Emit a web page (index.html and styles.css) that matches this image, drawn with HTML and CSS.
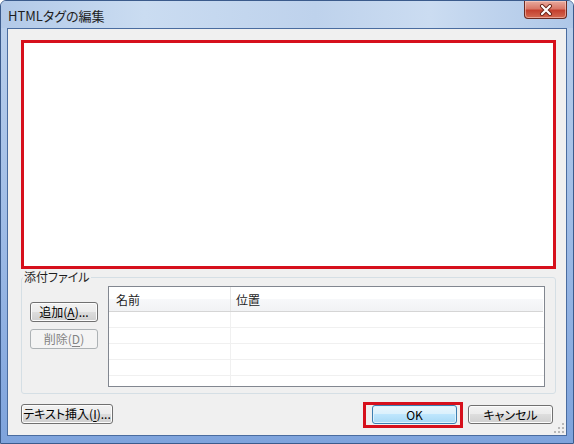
FILE: index.html
```html
<!DOCTYPE html>
<html lang="ja">
<head>
  <meta charset="UTF-8">
  <title>HTMLタグの編集</title>
  <link rel="stylesheet" href="styles.css">
</head>
<body>

  <div class="window">
    <div class="titlebar">
      <span class="title">HTMLタグの編集</span>
      <div class="close">
        <svg width="16" height="12" viewBox="0 0 16 12">
          <path d="M4 2 L12 10 M12 2 L4 10" stroke="#6b2418" stroke-width="4" stroke-linecap="round"/>
          <path d="M4 2 L12 10 M12 2 L4 10" stroke="#fff" stroke-width="2.2" stroke-linecap="round"/>
        </svg>
      </div>
    </div>

    <div class="client">
      <div class="editor"></div>

      <fieldset class="attach">
        <legend>添付ファイル</legend>
        <div class="attach-buttons">
          <button class="btn">追加(<u>A</u>)...</button>
          <button class="btn" disabled>削除(<u>D</u>)</button>
        </div>
        <div class="listview">
          <div class="lv-head">
            <div class="lv-col name">名前</div>
            <div class="lv-col path">位置</div>
          </div>
          <div class="lv-row"><div class="lv-cell name"></div><div class="lv-cell"></div></div>
          <div class="lv-row"><div class="lv-cell name"></div><div class="lv-cell"></div></div>
          <div class="lv-row"><div class="lv-cell name"></div><div class="lv-cell"></div></div>
          <div class="lv-row"><div class="lv-cell name"></div><div class="lv-cell"></div></div>
          <div class="lv-row last"><div class="lv-cell name"></div><div class="lv-cell"></div></div>
        </div>
      </fieldset>

      <div class="footer">
        <button class="btn btn-insert">テキスト挿入(<u>I</u>)...</button>
        <div class="spacer"></div>
        <button class="btn btn-ok marked">OK</button>
        <button class="btn btn-cancel">キャンセル</button>
      </div>

      <svg class="grip" width="10" height="10" viewBox="0 0 10 10">
        <rect x="8" y="0" width="2" height="2" fill="#b8b8b8"/>
        <rect x="4" y="4" width="2" height="2" fill="#b8b8b8"/>
        <rect x="8" y="4" width="2" height="2" fill="#b8b8b8"/>
        <rect x="0" y="8" width="2" height="2" fill="#b8b8b8"/>
        <rect x="4" y="8" width="2" height="2" fill="#b8b8b8"/>
        <rect x="8" y="8" width="2" height="2" fill="#b8b8b8"/>
      </svg>
    </div>
  </div>

</body>
</html>
```

FILE: styles.css
```css
body {
  margin: 0;
  padding: 0;
  font-family: "Noto Sans CJK JP", "Liberation Sans", sans-serif;
  font-size: 12px;
  font-feature-settings: "palt";
  color: #000;
  background: #fff;
}

.window {
  width: 574px;
  height: 444px;
  box-sizing: border-box;
  background: linear-gradient(to bottom, #bcd1ec, #9fbce6 50%, #7ea3dc);
  border: 1px solid #3b5b8c;
  border-radius: 6px 6px 0 0;
  overflow: hidden;
}

.titlebar {
  height: 27px;
  display: flex;
  align-items: flex-start;
  background: linear-gradient(to right, #b2c9e8, #cadcf1 25%, #bed2ec 55%, #cbdcf1 75%, #aec7e8);
}

.title {
  margin: 5px 0 0 7px;
  font-size: 13px;
  color: #1e1e1e;
  flex: 1;
}

.close {
  width: 43px;
  height: 18px;
  margin-right: 6px;
  box-sizing: border-box;
  border: 1px solid #6a2a22;
  border-top: none;
  border-radius: 0 0 4px 4px;
  background: linear-gradient(to bottom, #e8aa9e, #d97868 45%, #c4402e 55%, #d46a52);
  box-shadow: inset 0 0 0 1px rgba(255, 220, 210, 0.5);
  display: flex;
  align-items: center;
  justify-content: center;
}

.client {
  position: relative;
  margin: 0 6px;
  height: 408px;
  box-sizing: border-box;
  border: 1px solid #4a6c9f;
  background: #f0f0f0;
  padding-top: 11px;
}

.editor {
  height: 229px;
  margin: 0 10px 0 13px;
  box-sizing: border-box;
  border: 3px solid #d6101c;
  background: #fff;
}

.attach {
  margin: 1px 10px 0 13px;
  padding: 2px 10px 6px 8px;
  border: 1px solid #d5dfe5;
  border-radius: 3px;
  display: flex;
  gap: 10px;
}

.attach legend {
  padding: 0 1px;
  margin-left: -7px;
  line-height: 14px;
  color: #1e1e1e;
}

.attach-buttons {
  display: flex;
  flex-direction: column;
  gap: 7px;
  padding-top: 16px;
}

.btn {
  font-family: inherit;
  font-size: 12px;
  font-feature-settings: "palt";
  height: 20px;
  padding: 0;
  box-sizing: border-box;
  border: 1px solid #707070;
  border-radius: 3px;
  background: linear-gradient(to bottom, #f2f2f2, #ebebeb 50%, #dddddd 50%, #cfcfcf);
  box-shadow: inset 0 0 0 1px #fcfcfc;
  color: #000;
  line-height: 16px;
}

.btn u {
  text-underline-offset: 2px;
}

.btn:disabled {
  border-color: #adb2b5;
  background: #f4f4f4;
  box-shadow: none;
  color: #838383;
}

.attach-buttons .btn {
  width: 68px;
}

.listview {
  flex: 1;
  height: 101px;
  box-sizing: border-box;
  border: 1px solid #828790;
  background: #fff;
}

.lv-head {
  display: flex;
  height: 25px;
  box-sizing: border-box;
  border-bottom: 1px solid #d5d5d5;
  margin-right: 1px;
  background: linear-gradient(to bottom, #ffffff 50%, #f7f8fa 50%, #f1f2f4);
}

.lv-col {
  box-sizing: border-box;
  padding: 4px 0 0 7px;
  color: #1e1e1e;
}

.lv-col.name,
.lv-cell.name {
  box-sizing: border-box;
  width: 122px;
  border-right: 1px solid #e5e5e5;
}

.lv-col.path {
  padding-left: 5px;
}

.lv-row {
  display: flex;
  height: 16px;
  box-sizing: border-box;
  border-bottom: 1px solid #f0f0f0;
}

.lv-row.last {
  border-bottom: none;
  height: 10px;
}

.lv-cell.name {
  border-right-color: #f0f0f0;
}

.footer {
  display: flex;
  gap: 11px;
  margin: 10px 13px 0 13px;
}

.spacer {
  flex: 1;
}

.btn-insert {
  width: 92px;
}

.btn-ok,
.btn-cancel {
  width: 85px;
  height: 19px;
  margin-top: 1px;
}

.btn-ok {
  border-color: #3c7fb1;
  background: linear-gradient(to bottom, #eaf6fd, #d9f0fc 50%, #bee6fd 50%, #a7d9f5);
  box-shadow: inset 0 0 0 1px #dff2fc;
}

.marked {
  position: relative;
  overflow: visible;
}

.marked::after {
  content: "";
  position: absolute;
  left: -10px;
  right: -7px;
  top: -4px;
  bottom: -5px;
  border: 3px solid #d6101c;
}

.grip {
  position: absolute;
  right: 2px;
  bottom: 2px;
}
```
